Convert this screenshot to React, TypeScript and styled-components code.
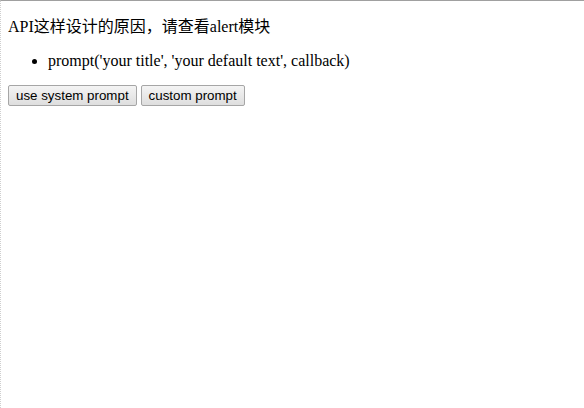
import React from "react";
import styled, { createGlobalStyle } from "styled-components";

const GlobalStyle = createGlobalStyle`
  html {
    border-top: 1px solid #a0a0a0;
    border-left: 1px dotted #cfcfcf;
    min-height: 100vh;
    box-sizing: border-box;
    background: #fff;
  }
  body {
    margin: 8px 8px 8px 7px;
    font-family: "Liberation Serif", "Noto Sans CJK SC", serif;
    font-size: 16px;
    color: #000;
  }
`;

const Intro = styled.p`
  margin: 9px 0 16px;
  line-height: 18px;
`;

const ApiList = styled.ul`
  margin: 16px 0 15px;
  padding-left: 40px;
  line-height: 18px;
`;

const Actions = styled.div`
  display: flex;
  gap: 4px;
`;

const Button = styled.button`
  font-family: "Liberation Sans", Arial, sans-serif;
  font-size: 13.33px;
  height: 21px;
  padding: 1px 7px;
  color: #000;
  border: 1px solid #a6a6a6;
  border-radius: 2px;
  background: linear-gradient(#f4f4f4, #dedede);
  cursor: pointer;
`;

export default function App() {
  return (
    <>
      <GlobalStyle />
      <Intro>API这样设计的原因，请查看alert模块</Intro>
      <ApiList>
        <li>prompt('your title', 'your default text', callback)</li>
      </ApiList>
      <Actions>
        <Button>use system prompt</Button>
        <Button>custom prompt</Button>
      </Actions>
    </>
  );
}
